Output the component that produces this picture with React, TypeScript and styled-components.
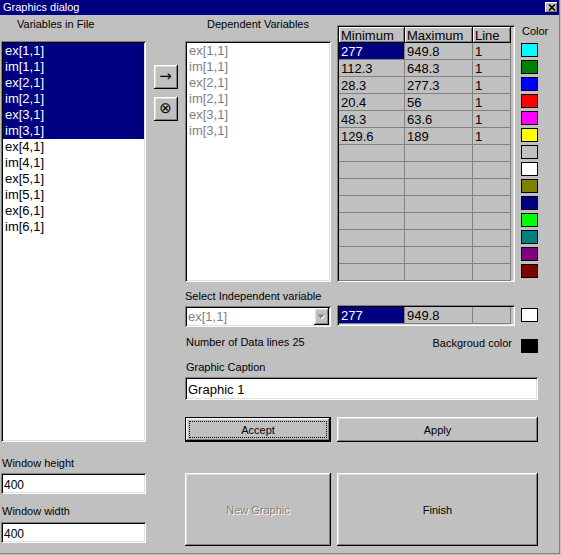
import styled, { createGlobalStyle, css } from "styled-components";

const GlobalStyle = createGlobalStyle`
  html, body { margin: 0; padding: 0; background: #c0c0c0; }
  body { font-family: "Liberation Sans", Arial, sans-serif; }
  * { box-sizing: border-box; }
`;

const raised = css`
  box-shadow: inset -1px -1px #000, inset 1px 1px #fff, inset -2px -2px #808080, inset 2px 2px #dfdfdf;
`;
const sunken = css`
  box-shadow: inset 1px 1px #808080, inset -1px -1px #fff, inset 2px 2px #000, inset -2px -2px #dfdfdf;
`;

const Window = styled.div`
  width: 560px;
  height: 554px;
  background: #c0c0c0;
  border-right: 1px solid #808080;
  border-bottom: 1px solid #808080;
  display: flex;
  flex-direction: column;
  font-size: 11px;
  color: #000;
`;

const TitleBar = styled.div`
  height: 15px;
  flex-shrink: 0;
  background: #000080;
  color: #fff;
  display: flex;
  align-items: center;
  justify-content: space-between;
  padding: 0 1px 0 3px;
  font-size: 11px;
  line-height: 15px;
`;

const CloseButton = styled.div`
  width: 13px;
  height: 11px;
  background: #c0c0c0;
  display: flex;
  align-items: center;
  justify-content: center;
  box-shadow: inset -1px -1px #000, inset 1px 1px #fff, inset -2px -2px #808080;
`;

const Body = styled.div`
  flex: 1;
  display: flex;
  align-items: flex-start;
  padding-left: 1px;
`;

const LeftCol = styled.div`
  width: 145px;
  display: flex;
  flex-direction: column;
`;

const ArrowCol = styled.div`
  width: 39px;
  display: flex;
  flex-direction: column;
  align-items: center;
  padding-top: 50px;
  gap: 8px;
`;

const Label = styled.div<{ $center?: boolean; $indent?: number; $top?: number; $h?: number }>`
  font-size: 11px;
  line-height: 13px;
  height: ${p => (p.$h ? `${p.$h}px` : "13px")};
  margin-top: ${p => p.$top ?? 0}px;
  padding-left: ${p => p.$indent ?? 0}px;
  text-align: ${p => (p.$center ? "center" : "left")};
  white-space: nowrap;
`;

const ListBox = styled.div<{ $h: number }>`
  ${sunken};
  background: #fff;
  height: ${p => p.$h}px;
  padding: 2px;
  overflow: hidden;
`;

const ListItem = styled.div<{ $selected?: boolean; $disabled?: boolean }>`
  font-size: 13px;
  line-height: 16px;
  height: 16px;
  padding-left: 2px;
  background: ${p => (p.$selected ? "#000080" : "transparent")};
  color: ${p => (p.$selected ? "#fff" : p.$disabled ? "#808080" : "#000")};
`;

const SmallButton = styled.div<{ $size: number }>`
  ${raised};
  width: 24px;
  height: 24px;
  display: flex;
  align-items: center;
  justify-content: center;
  font-family: "DejaVu Sans", sans-serif;
  font-size: ${p => p.$size}px;
  line-height: 1;
  padding-bottom: 1px;
`;

const Field = styled.input<{ $top?: number; $size?: number }>`
  ${sunken};
  display: block;
  border: none;
  outline: none;
  background: #fff;
  height: ${p => (p.$size === 13 ? 23 : 21)}px;
  width: 100%;
  margin: ${p => p.$top ?? 0}px 0 0 0;
  padding: 2px 0 0 3px;
  font-family: "Liberation Sans", Arial, sans-serif;
  font-size: ${p => p.$size ?? 12}px;
  color: #000;
`;

/* rows: lists+grid | select label | combo | data lines | caption label | caption | accept | finish */
const RightArea = styled.div`
  width: 353px;
  display: grid;
  grid-template-columns: 146px 178px 17px;
  grid-template-rows: 267px 21px 24px 26px 21px 26px 42px 104px;
  column-gap: 6px;
  align-items: start;
`;

const Stack = styled.div`
  display: flex;
  flex-direction: column;
`;

const GridBox = styled.div<{ $h: number; $top: number }>`
  ${sunken};
  height: ${p => p.$h}px;
  margin-top: ${p => p.$top}px;
  padding: 2px;
  background: #c0c0c0;
  overflow: hidden;
`;

const Table = styled.div`
  display: grid;
  grid-template-columns: 66px 68px 38px;
`;

const HeadCell = styled.div`
  height: 16px;
  font-size: 13px;
  line-height: 14px;
  padding: 2px 0 0 2px;
  border-right: 1px solid #000;
  border-bottom: 1px solid #000;
  box-shadow: inset 1px 1px #fff, inset -1px -1px #808080;
`;

const Cell = styled.div<{ $selected?: boolean }>`
  height: 17px;
  font-size: 13px;
  line-height: 14px;
  padding: 2px 0 0 2px;
  border-right: 1px solid #808080;
  border-bottom: 1px solid #808080;
  background: ${p => (p.$selected ? "#000080" : "transparent")};
  color: ${p => (p.$selected ? "#fff" : "#000")};
`;

const ColorCol = styled.div`
  margin-top: 10px;
  display: flex;
  flex-direction: column;
`;

const Swatches = styled.div`
  display: flex;
  flex-direction: column;
  gap: 3px;
`;

const Swatch = styled.div<{ $color: string; $top?: number }>`
  width: 17px;
  height: 14px;
  margin-top: ${p => p.$top ?? 0}px;
  border: 1px solid #000;
  background: ${p => p.$color};
`;

const Combo = styled.div`
  ${sunken};
  background: #fff;
  height: 21px;
  margin-top: 3px;
  padding: 2px;
  display: flex;
  align-items: stretch;
`;

const ComboText = styled.div`
  flex: 1;
  font-size: 13px;
  line-height: 17px;
  padding-left: 1px;
  color: #808080;
`;

const ComboArrow = styled.div`
  ${raised};
  width: 15px;
  background: #c0c0c0;
  display: flex;
  align-items: center;
  justify-content: center;
`;

const RightText = styled.div<{ $top: number }>`
  margin-top: ${p => p.$top}px;
  font-size: 11px;
  line-height: 13px;
  text-align: right;
  padding-right: 3px;
  white-space: nowrap;
`;

const Button = styled.div<{ $h: number; $top: number; $span?: string; $default?: boolean; $disabled?: boolean }>`
  position: relative;
  grid-column: ${p => p.$span ?? "auto"};
  height: ${p => p.$h}px;
  margin-top: ${p => p.$top}px;
  display: flex;
  align-items: center;
  justify-content: center;
  font-size: 11px;
  color: ${p => (p.$disabled ? "#808080" : "#000")};
  text-shadow: ${p => (p.$disabled ? "1px 1px 0 #fff" : "none")};
  ${p =>
    p.$default
      ? css`
          border: 1px solid #000;
          box-shadow: inset -1px -1px #000, inset 1px 1px #fff, inset -2px -2px #808080, inset 2px 2px #dfdfdf;
        `
      : raised};
`;

const FocusRing = styled.div`
  position: absolute;
  inset: 3px;
  border: 1px dotted #000;
`;

const Span = styled.div<{ $span: string; $top?: number }>`
  grid-column: ${p => p.$span};
  margin-top: ${p => p.$top ?? 0}px;
`;

const variables = ["ex[1,1]", "im[1,1]", "ex[2,1]", "im[2,1]", "ex[3,1]", "im[3,1]", "ex[4,1]", "im[4,1]", "ex[5,1]", "im[5,1]", "ex[6,1]", "im[6,1]"];
const dependent = variables.slice(0, 6);

const rows: string[][] = [
  ["277", "949.8", "1"],
  ["112.3", "648.3", "1"],
  ["28.3", "277.3", "1"],
  ["20.4", "56", "1"],
  ["48.3", "63.6", "1"],
  ["129.6", "189", "1"],
  ...Array.from({ length: 8 }, () => ["", "", ""]),
];

const colors = ["#00ffff", "#008000", "#0000ff", "#ff0000", "#ff00ff", "#ffff00", "#c0c0c0", "#ffffff", "#808000", "#000080", "#00ff00", "#008080", "#800080", "#800000"];

export default function App() {
  return (
    <>
      <GlobalStyle />
      <Window>
        <TitleBar>
          <span>Graphics dialog</span>
          <CloseButton>
            <svg width="8" height="7" viewBox="0 0 8 7">
              <path d="M1 0.5 L7 6.5 M7 0.5 L1 6.5" stroke="#000" strokeWidth="1.6" />
            </svg>
          </CloseButton>
        </TitleBar>
        <Body>
          <LeftCol>
            <Label $indent={16} $h={26} style={{ paddingTop: 3 }}>Variables in File</Label>
            <ListBox $h={401}>
              {variables.map((v, i) => (
                <ListItem key={v} $selected={i < 6}>{v}</ListItem>
              ))}
            </ListBox>
            <Label $top={15} $indent={1}>Window height</Label>
            <Field $top={3} defaultValue="400" />
            <Label $top={11} $indent={1}>Window width</Label>
            <Field $top={4} defaultValue="400" />
          </LeftCol>

          <ArrowCol>
            <SmallButton $size={15}>→</SmallButton>
            <SmallButton $size={15}>⊗</SmallButton>
          </ArrowCol>

          <RightArea>
            <Stack>
              <Label $center $h={26} style={{ paddingTop: 3 }}>Dependent Variables</Label>
              <ListBox $h={241}>
                {dependent.map(v => (
                  <ListItem key={v} $disabled>{v}</ListItem>
                ))}
              </ListBox>
            </Stack>
            <GridBox $h={257} $top={10}>
              <Table>
                <HeadCell>Minimum</HeadCell>
                <HeadCell>Maximum</HeadCell>
                <HeadCell>Line</HeadCell>
                {rows.map((r, i) =>
                  r.map((c, j) => (
                    <Cell key={`${i}-${j}`} $selected={i === 0 && j === 0}>{c}</Cell>
                  ))
                )}
              </Table>
            </GridBox>
            <ColorCol>
              <Label $h={18} $indent={1}>Color</Label>
              <Swatches>
                {colors.map(c => (
                  <Swatch key={c} $color={c} />
                ))}
              </Swatches>
            </ColorCol>

            <Span $span="1 / -1" $top={8}>
              <Label>Select Independent variable</Label>
            </Span>

            <Combo>
              <ComboText>ex[1,1]</ComboText>
              <ComboArrow>
                <svg width="9" height="6" viewBox="0 0 9 6">
                  <path d="M1.5 1.5 L8.5 1.5 L5 5.5 Z" fill="#fff" />
                  <path d="M0.5 0.5 L7.5 0.5 L4 4.5 Z" fill="#808080" />
                </svg>
              </ComboArrow>
            </Combo>
            <GridBox $h={21} $top={2}>
              <Table>
                <Cell $selected>277</Cell>
                <Cell>949.8</Cell>
                <Cell />
              </Table>
            </GridBox>
            <Swatch $color="#ffffff" $top={5} />

            <Label $top={9} $indent={1}>Number of Data lines 25</Label>
            <RightText $top={10}>Backgroud color</RightText>
            <Swatch $color="#000000" $top={12} />

            <Span $span="1 / -1" $top={8}>
              <Label $indent={1}>Graphic Caption</Label>
            </Span>
            <Span $span="1 / -1" $top={3}>
              <Field $size={13} defaultValue="Graphic 1" />
            </Span>

            <Button $h={25} $top={17} $default>
              <FocusRing />
              Accept
            </Button>
            <Button $h={25} $top={17} $span="2 / 4">Apply</Button>

            <Button $h={73} $top={31} $disabled>New Graphic</Button>
            <Button $h={73} $top={31} $span="2 / 4">Finish</Button>
          </RightArea>
        </Body>
      </Window>
    </>
  );
}
